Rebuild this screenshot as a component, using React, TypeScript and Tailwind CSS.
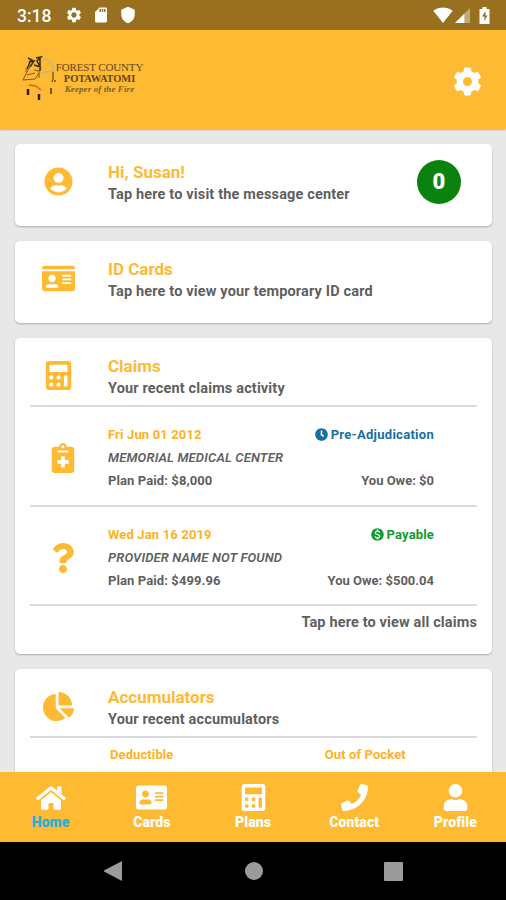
import type { ReactNode } from 'react'
import {
  FaAddressCard,
  FaCalculator,
  FaChartPie,
  FaClock,
  FaCog,
  FaHome,
  FaIdCard,
  FaNotesMedical,
  FaPhone,
  FaQuestion,
  FaUser,
  FaUserCircle,
} from 'react-icons/fa'
import { MdMonetizationOn, MdSdCard, MdSettings, MdShield, MdSignalWifi4Bar } from 'react-icons/md'

const StatusBar = () => (
  <div className="flex h-[30px] shrink-0 items-center bg-[#98701f] pl-[17px] pr-[16px] text-white">
    <span className="w-[48px] pt-[3px] text-[17.500px] font-medium leading-none">3:18</span>
    <MdSettings className="size-[18px]" />
    <MdSdCard className="ml-[9px] size-[18px]" />
    <MdShield className="ml-[9px] size-[18px]" />
    <div className="ml-auto flex items-center">
      <MdSignalWifi4Bar className="size-[20px]" />
      <svg viewBox="0 0 16 16" className="ml-[2px] size-[15px]">
        <path d="M16 0v16H0z" fill="#fff" opacity=".4" />
        <path d="M10 6v10H0z" fill="#fff" />
      </svg>
      <svg viewBox="0 0 10 17" className="ml-[9px] h-[17px] w-[11px]">
        <path d="M3 0h4v2h3v15H0V2h3z" fill="#fff" />
        <path d="M6 4 2.5 9.500H5V14l3-5.500H6z" fill="#98701f" />
      </svg>
    </div>
  </div>
)

const Logo = () => (
  <div className="flex items-center">
    <svg viewBox="0 0 36 46" className="h-[46px] w-9" fill="none">
      <path d="M7 3l4 2-3 2 5-1-4 6M15 3l5-1-4 4 3 6-6-2M19 3v13M9 7 6 14" stroke="#3a2a10" strokeWidth="1.500" />
      <path d="M20 4c7-1 12 4 13 12l-13 2" stroke="#b6b98a" strokeWidth="1.300" />
      <path d="M10 9 6 17l-4 8 12-1 4-6M13 15l5 1v7M6 20l8-2" stroke="#80591c" strokeWidth="1" />
      <path d="M5 13v4M8 30l7 1 5 4" stroke="#e2572b" strokeWidth="1.300" />
      <path d="M32 17v7l-1 3M33 26h2" stroke="#765118" strokeWidth="1.300" />
      <path d="M7 34v6M18 39v6" stroke="#2a1d0b" strokeWidth="2.400" />
      <path d="M30 33v6" stroke="#765118" strokeWidth="2" />
    </svg>
    <div className="flex w-[85px] flex-col items-center whitespace-nowrap font-['Liberation_Serif',serif] text-[#5f481c]">
      <span className="text-[11px] leading-[12px] tracking-[-0.15px]">FOREST COUNTY</span>
      <span className="text-[10.500px] font-bold leading-[11px] tracking-[-0.1px]">POTAWATOMI</span>
      <span className="text-[9px] font-bold italic leading-[10px] tracking-[0.1px] text-[#80601f]">
        Keeper of the Fire
      </span>
    </div>
  </div>
)

const Header = () => (
  <header className="z-10 flex h-[99px] shrink-0 items-center justify-between bg-[#ffba33] pl-[21px] pr-6 shadow-[0_1px_2px_rgba(0,0,0,0.25)]">
    <div className="pb-1">
      <Logo />
    </div>
    <FaCog className="mt-[4px] size-[29px] text-white" />
  </header>
)

type CardProps = {
  icon: ReactNode
  title: string
  subtitle: string
  badge?: string
  className: string
  children?: ReactNode
}

const Card = ({ icon, title, subtitle, badge, className, children }: CardProps) => (
  <section className={`shrink-0 rounded-[5px] bg-white px-[15px] shadow-[0_1px_2px_rgba(0,0,0,0.25)] ${className}`}>
    <div className="flex h-[67px]">
      <div className="flex w-[57px] justify-center pt-[7px] text-[29px] text-[#ffba33]">
        <div className="flex h-[60px] items-center">{icon}</div>
      </div>
      <div className="ml-[21px] pt-[17px]">
        <h2 className="text-[17px] font-bold leading-[22px] text-[#ffba33]">{title}</h2>
        <p className="pt-px text-[14.500px] font-bold leading-[22px] tracking-[0.15px] text-[#5f5f5f]">{subtitle}</p>
      </div>
      {badge && (
        <div className="ml-auto mr-4 mt-4 flex size-[44px] items-center justify-center rounded-full bg-[#0b820e] pb-0.5 text-[22px] font-black text-white">
          {badge}
        </div>
      )}
    </div>
    {children}
  </section>
)

type ClaimProps = {
  icon: ReactNode
  date: string
  provider: string
  paid: string
  owe: string
  status: ReactNode
}

const Claim = ({ icon, date, provider, paid, owe, status }: ClaimProps) => (
  <div className="flex h-[100px] border-t-2 border-[#dadada] pr-[43px]">
    <div className="flex w-[65px] items-center justify-center pt-[3px] text-[30px] text-[#ffba33]">{icon}</div>
    <div className="ml-[13px] flex-1 pt-4 text-[13px] font-bold leading-[23px] text-[#5f5f5f]">
      <div className="flex justify-between tracking-[0.15px]">
        <span className="text-[#ffb126]">{date}</span>
        {status}
      </div>
      <p className="font-semibold italic tracking-[0.15px]">{provider}</p>
      <div className="flex justify-between">
        <span className="tracking-[0.1px]">Plan Paid: {paid}</span>
        <span>You Owe: {owe}</span>
      </div>
    </div>
  </div>
)

const tabs = [
  { label: 'Home', icon: <FaHome className="size-[30px]" />, active: true },
  { label: 'Cards', icon: <FaAddressCard className="size-[31px]" /> },
  { label: 'Plans', icon: <FaCalculator className="size-[27px]" /> },
  { label: 'Contact', icon: <FaPhone className="size-[27px]" /> },
  { label: 'Profile', icon: <FaUser className="size-[27px]" /> },
]

const TabBar = () => (
  <nav className="flex h-[70px] shrink-0 bg-[#ffba33] pt-[11px]">
    {tabs.map((tab) => (
      <div key={tab.label} className="flex flex-1 flex-col items-center text-white">
        <div className="flex h-[29px] items-center">{tab.icon}</div>
        <span className={`text-[14px] font-black leading-5 tracking-[0.1px] ${tab.active ? 'text-[#2cacd6]' : ''}`}>
          {tab.label}
        </span>
      </div>
    ))}
  </nav>
)

const SystemNav = () => (
  <div className="flex h-[58px] shrink-0 items-center justify-center gap-[121px] bg-black text-[#9b9b9b]">
    <svg viewBox="0 0 20 20" className="size-5" fill="currentColor">
      <path d="M18 0v20L-1 10z" />
    </svg>
    <div className="size-[18px] rounded-full bg-current" />
    <div className="size-[19px] rounded-[1px] bg-current" />
  </div>
)

export default function App() {
  return (
    <div className="flex h-[900px] w-[506px] flex-col overflow-hidden bg-[#e8e8e8] font-[Roboto,sans-serif]">
      <StatusBar />
      <Header />
      <main className="flex min-h-0 flex-1 flex-col gap-[15px] overflow-hidden pl-[15px] pr-[14px] pt-[15px]">
        <Card
          className="h-[82px]"
          icon={<FaUserCircle />}
          title="Hi, Susan!"
          subtitle="Tap here to visit the message center"
          badge="0"
        />
        <Card
          className="h-[82px]"
          icon={<FaIdCard className="size-[33px]" />}
          title="ID Cards"
          subtitle="Tap here to view your temporary ID card"
        />
        <Card className="h-[316px]" icon={<FaCalculator />} title="Claims" subtitle="Your recent claims activity">
          <Claim
            icon={<FaNotesMedical />}
            date="Fri Jun 01 2012"
            provider="MEMORIAL MEDICAL CENTER"
            paid="$8,000"
            owe="$0"
            status={
              <span className="flex items-center gap-[3px] tracking-[0.28px] text-[#176fa3]">
                <FaClock className="size-[13px]" />
                Pre-Adjudication
              </span>
            }
          />
          <Claim
            icon={<FaQuestion />}
            date="Wed Jan 16 2019"
            provider="PROVIDER NAME NOT FOUND"
            paid="$499.96"
            owe="$500.04"
            status={
              <span className="flex items-center gap-[2px] text-[#0f9b2d]">
                <MdMonetizationOn className="size-[15px]" />
                Payable
              </span>
            }
          />
          <p className="-mt-px border-t-2 border-[#dadada] pt-[5px] text-right text-[14.500px] font-bold leading-[24px] tracking-[0.14px] text-[#5f5f5f]">
            Tap here to view all claims
          </p>
        </Card>
        <Card
          className="h-[180px]"
          icon={<FaChartPie className="size-[31px]" />}
          title="Accumulators"
          subtitle="Your recent accumulators"
        >
          <div className="grid grid-cols-2 border-t-2 border-[#dadada] pt-[7px] text-center text-[13px] font-bold leading-[20px] tracking-[0.1px] text-[#ffb126]">
            <span>Deductible</span>
            <span>Out of Pocket</span>
          </div>
        </Card>
      </main>
      <TabBar />
      <SystemNav />
    </div>
  )
}
